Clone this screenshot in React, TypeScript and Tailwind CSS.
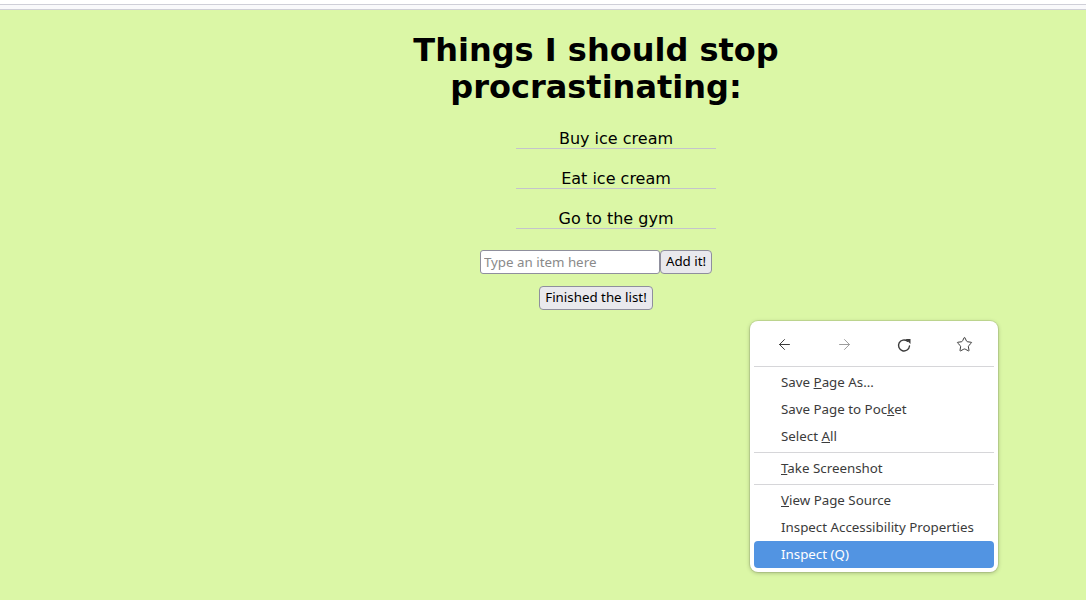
import React from "react";
import { ArrowLeft, ArrowRight, Star } from "lucide-react";

const items = ["Buy ice cream", "Eat ice cream", "Go to the gym"];

const ReloadIcon = () => (
  <svg width="16" height="16" viewBox="0 0 16 16" fill="none">
    <path
      d="M13.5 9 A5.5 5.5 0 1 1 11.5 4.2"
      stroke="currentColor"
      strokeWidth="1.4"
      strokeLinecap="round"
    />
    <polygon points="9.5,2 14.5,2 14.5,7" fill="currentColor" />
  </svg>
);

const MenuItem = ({
  children,
  active,
}: {
  children: React.ReactNode;
  active?: boolean;
}) => (
  <div
    className={
      active
        ? "h-[27px] flex items-center pt-px pl-[27px] rounded bg-[#5294e2] text-white"
        : "h-[27px] flex items-center pt-px pl-[27px] text-[#3b3b3b]"
    }
  >
    {children}
  </div>
);

const Separator = () => <div className="my-[2px] h-px bg-[#d6d6d9]" />;

const ContextMenu = () => (
  <div className="absolute left-[750px] top-[321px] w-[248px] p-[4px] bg-white rounded-lg shadow-[0_0_0_1px_rgba(0,0,0,0.08),0_1px_4px_rgba(0,0,0,0.25)] font-['Noto_Sans',sans-serif] text-[13.33px]">
    <div className="h-[39px] grid grid-cols-4 text-[#3b3b3b]">
      <div className="flex items-center justify-center">
        <ArrowLeft size={17} strokeWidth={1.4} />
      </div>
      <div className="flex items-center justify-center text-[#9c9c9c]">
        <ArrowRight size={17} strokeWidth={1.4} />
      </div>
      <div className="flex items-center justify-center">
        <ReloadIcon />
      </div>
      <div className="flex items-center justify-center">
        <Star size={17} strokeWidth={1.4} />
      </div>
    </div>
    <Separator />
    <MenuItem>
      <span>
        Save <u>P</u>age As…
      </span>
    </MenuItem>
    <MenuItem>
      <span>
        Save Page to Poc<u>k</u>et
      </span>
    </MenuItem>
    <MenuItem>
      <span>
        Select <u>A</u>ll
      </span>
    </MenuItem>
    <Separator />
    <MenuItem>
      <span>
        <u>T</u>ake Screenshot
      </span>
    </MenuItem>
    <Separator />
    <MenuItem>
      <span>
        <u>V</u>iew Page Source
      </span>
    </MenuItem>
    <MenuItem>Inspect Accessibility Properties</MenuItem>
    <MenuItem active>Inspect (Q)</MenuItem>
  </div>
);

export default function App() {
  return (
    <div className="relative h-[600px] overflow-hidden bg-[#dbf7a6] font-['DejaVu_Sans',sans-serif] text-black">
      <div className="h-1 bg-white" />
      <div className="h-[6px] border-y border-[#cfcfd8] bg-[#f9f9fb]" />

      <div className="flex justify-center pl-[106px]">
        <div className="w-[400px] text-center">
          <h1 className="mt-[22px] mb-[22px] text-[32px] leading-[37px] font-bold">
            Things I should stop procrastinating:
          </h1>
          <ul className="pl-10 pt-px">
            {items.map((item, index) => (
              <li
                key={index}
                className="w-[200px] mx-auto mb-[20px] border-b border-[#c4c4cc] text-[16px] leading-[19px]"
              >
                {item}
              </li>
            ))}
          </ul>
          <div className="flex flex-col items-center font-['Noto_Sans',sans-serif] text-[13.33px]">
            <div className="flex mt-px">
              <input
                type="text"
                placeholder="Type an item here"
                className="w-[180px] h-[24px] px-[3px] bg-white border border-[#8f8f9d] rounded-[3px] placeholder:text-[#8a8a8a] outline-none"
              />
              <button className="h-[24px] px-[5px] bg-[#e9e9ed] border border-[#8f8f9d] rounded-[4px]">
                Add it!
              </button>
            </div>
            <button className="mt-[12px] h-[24px] px-[5px] bg-[#e9e9ed] border border-[#8f8f9d] rounded-[4px]">
              Finished the list!
            </button>
          </div>
        </div>
      </div>

      <ContextMenu />
    </div>
  );
}
